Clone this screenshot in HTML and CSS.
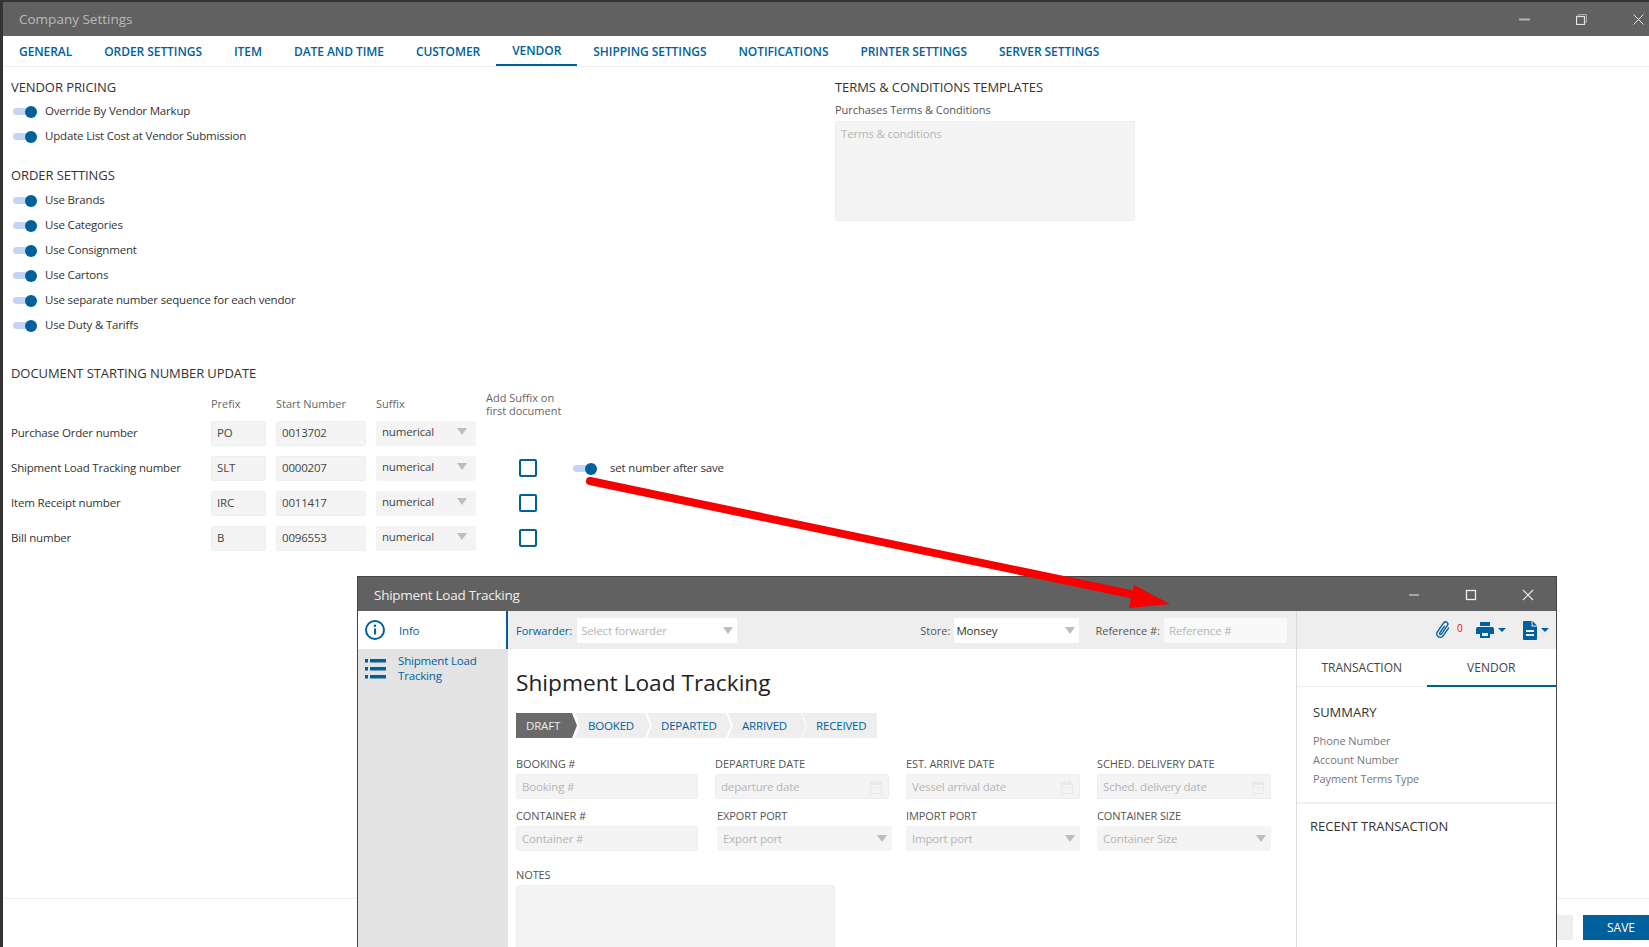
FILE: index.html
```html
<!DOCTYPE html>
<html lang="en">
<head>
<meta charset="utf-8">
<title>Company Settings</title>
<link rel="stylesheet" href="styles.css">
</head>
<body>
<div class="app">
  <header class="titlebar">
    <span class="titlebar-text">Company Settings</span>
    <div class="winbtns">
      <svg width="11" height="11" viewBox="0 0 11 11"><path d="M0 5.500h11" stroke="#b5b5b5" stroke-width="2"/></svg>
      <svg width="11" height="11" viewBox="0 0 11 11" fill="none" stroke="#e4e4e4"><rect x=".5" y="2.500" width="8" height="8" stroke-width="1.2"/><path d="M2.500 2.500v-2h8v8h-2" stroke="#aaa"/></svg>
      <svg width="11" height="11" viewBox="0 0 11 11"><path d="M.5.500l10 10M10.500.500l-10 10" stroke="#e8e8e8" stroke-width="1"/></svg>
    </div>
  </header>
  <nav class="tabs">
    <a class="tab">GENERAL</a><a class="tab">ORDER SETTINGS</a><a class="tab">ITEM</a><a class="tab">DATE AND TIME</a><a class="tab">CUSTOMER</a><a class="tab tab-active">VENDOR</a><a class="tab">SHIPPING SETTINGS</a><a class="tab">NOTIFICATIONS</a><a class="tab">PRINTER SETTINGS</a><a class="tab">SERVER SETTINGS</a>
  </nav>
  <main class="content">
    <section class="left">
      <h2 class="heading heading-pricing">VENDOR PRICING</h2>
      <div class="tg-row"><span class="toggle"></span>Override By Vendor Markup</div>
      <div class="tg-row"><span class="toggle"></span>Update List Cost at Vendor Submission</div>
      <h2 class="heading heading-order">ORDER SETTINGS</h2>
      <div class="tg-row"><span class="toggle"></span>Use Brands</div>
      <div class="tg-row"><span class="toggle"></span>Use Categories</div>
      <div class="tg-row"><span class="toggle"></span>Use Consignment</div>
      <div class="tg-row"><span class="toggle"></span>Use Cartons</div>
      <div class="tg-row"><span class="toggle"></span>Use separate number sequence for each vendor</div>
      <div class="tg-row"><span class="toggle"></span>Use Duty &amp; Tariffs</div>
      <h2 class="heading heading-doc">DOCUMENT STARTING NUMBER UPDATE</h2>
      <div class="doc-grid">
        <span></span><span class="col-label">Prefix</span><span class="col-label">Start Number</span><span class="col-label">Suffix</span><span class="col-label col-suffix">Add Suffix on<br>first document</span><span></span>

        <span class="doc-name">Purchase Order number</span><div class="field">PO</div><div class="field">0013702</div><div class="field select">numerical</div><span></span><span></span>

        <span class="doc-name">Shipment Load Tracking number</span><div class="field">SLT</div><div class="field">0000207</div><div class="field select">numerical</div><span class="check"></span><div class="tg-row tg-inline"><span class="toggle"></span>set number after save</div>

        <span class="doc-name">Item Receipt number</span><div class="field">IRC</div><div class="field">0011417</div><div class="field select">numerical</div><span class="check"></span><span></span>

        <span class="doc-name">Bill number</span><div class="field">B</div><div class="field">0096553</div><div class="field select">numerical</div><span class="check"></span><span></span>
      </div>
    </section>
    <section class="right">
      <h2 class="heading">TERMS &amp; CONDITIONS TEMPLATES</h2>
      <div class="terms-label">Purchases Terms &amp; Conditions</div>
      <div class="terms-box">Terms &amp; conditions</div>
    </section>
  </main>
  <footer class="footer">
    <button class="btn btn-cancel">CANCEL</button>
    <button class="btn btn-save">SAVE</button>
  </footer>
</div>

<div class="window">
  <header class="win-title">
    <span>Shipment Load Tracking</span>
    <div class="win-btns">
      <svg width="12" height="12" viewBox="0 0 12 12"><path d="M1 6h10" stroke="#bbb" stroke-width="1.5"/></svg>
      <svg width="12" height="12" viewBox="0 0 12 12" fill="none"><rect x="1.500" y="1.500" width="9" height="9" stroke="#eee" stroke-width="1.300"/></svg>
      <svg width="12" height="12" viewBox="0 0 12 12"><path d="M1 1l10 10M11 1L1 11" stroke="#eee" stroke-width="1.100"/></svg>
    </div>
  </header>
  <div class="win-body">
    <aside class="side">
      <div class="side-item side-active">
        <svg width="20" height="20" viewBox="0 0 20 20" fill="none" stroke="#00609c"><circle cx="10" cy="10" r="9" stroke-width="2"/><path d="M10 8.500v6" stroke-width="2"/><circle cx="10" cy="5.700" r="1.300" fill="#00609c" stroke="none"/></svg>
        <span>Info</span>
      </div>
      <div class="side-item side-list">
        <svg width="21" height="20" viewBox="0 0 21 20" fill="#00609c"><rect x="0" y="0" width="3" height="3.500"/><rect x="5" y="0" width="16" height="3.500"/><rect x="0" y="8" width="3" height="3.500"/><rect x="5" y="8" width="16" height="3.500"/><rect x="0" y="16" width="3" height="3.500"/><rect x="5" y="16" width="16" height="3.500"/></svg>
        <span>Shipment Load<br>Tracking</span>
      </div>
    </aside>
    <div class="win-main">
      <div class="toolbar">
        <span class="tb-label tb-blue">Forwarder:</span>
        <div class="tb-box tb-forwarder select ph">Select forwarder</div>
        <span class="tb-label tb-store">Store:</span>
        <div class="tb-box tb-monsey select">Monsey</div>
        <span class="tb-label tb-ref">Reference #:</span>
        <div class="tb-box tb-refbox ph">Reference #</div>
      </div>
      <div class="form-area">
        <h1 class="win-h1">Shipment Load Tracking</h1>
        <div class="steps">
          <span class="step step-draft">DRAFT</span><span class="step step-booked">BOOKED</span><span class="step step-departed">DEPARTED</span><span class="step step-arrived">ARRIVED</span><span class="step step-received">RECEIVED</span>
        </div>
        <div class="form-grid">
          <div class="fg"><label>BOOKING #</label><div class="field ph">Booking #</div></div>
          <div class="fg"><label>DEPARTURE DATE</label><div class="field ph date">departure date<svg width="14" height="16" viewBox="0 0 14 16" fill="#e9e9e9"><path d="M1 3h3V1h1v2h4V1h1v2h3v12H1zM2 6v8h10V6z"/><path d="M3 8h2v1H3zm3 0h2v1H6zm3 0h2v1H9z"/></svg></div></div>
          <div class="fg"><label>EST. ARRIVE DATE</label><div class="field ph date">Vessel arrival date<svg width="14" height="16" viewBox="0 0 14 16" fill="#e9e9e9"><path d="M1 3h3V1h1v2h4V1h1v2h3v12H1zM2 6v8h10V6z"/><path d="M3 8h2v1H3zm3 0h2v1H6zm3 0h2v1H9z"/></svg></div></div>
          <div class="fg"><label>SCHED. DELIVERY DATE</label><div class="field ph date">Sched. delivery date<svg width="14" height="16" viewBox="0 0 14 16" fill="#e9e9e9"><path d="M1 3h3V1h1v2h4V1h1v2h3v12H1zM2 6v8h10V6z"/><path d="M3 8h2v1H3zm3 0h2v1H6zm3 0h2v1H9z"/></svg></div></div>
          <div class="fg"><label>CONTAINER #</label><div class="field ph">Container #</div></div>
          <div class="fg fg-export"><label>EXPORT PORT</label><div class="field ph select">Export port</div></div>
          <div class="fg"><label>IMPORT PORT</label><div class="field ph select">Import port</div></div>
          <div class="fg"><label>CONTAINER SIZE</label><div class="field ph select">Container Size</div></div>
        </div>
        <label class="notes-label">NOTES</label>
        <div class="notes"></div>
      </div>
    </div>
    <aside class="panel">
      <div class="panel-tools">
        <svg width="17" height="20" viewBox="0 0 17 20" fill="none" stroke="#00609c" stroke-width="1.400" stroke-linecap="round"><g transform="rotate(35 8.500 10)"><path d="M11.500 5.500V15a3.500 3.500 0 0 1-7 0V4a2.300 2.300 0 0 1 4.600 0v10.500a1 1 0 0 1-2 0V6.500"/></g></svg>
        <span class="count">0</span>
        <svg class="ic-print" width="18" height="16" viewBox="0 0 18 16" fill="#00609c"><path d="M4 0h10v4H4zM2 5h14a2 2 0 0 1 2 2v5h-4v4H4v-4H0V7a2 2 0 0 1 2-2zm4 6v3h6v-3z"/></svg>
        <span class="caret"></span>
        <svg class="ic-doc" width="14" height="19" viewBox="0 0 14 19" fill="#00609c"><path d="M1 0h7.500v5.500H14V18a1 1 0 0 1-1 1H1a1 1 0 0 1-1-1V1a1 1 0 0 1 1-1zM9.500 0L14 4.500H9.500zM3 9v2h8V9zm0 4v2h8v-2z"/></svg>
        <span class="caret"></span>
      </div>
      <div class="panel-tabs">
        <span class="ptab">TRANSACTION</span><span class="ptab ptab-active">VENDOR</span>
      </div>
      <div class="summary">
        <h3 class="heading">SUMMARY</h3>
        <p>Phone Number</p>
        <p>Account Number</p>
        <p>Payment Terms Type</p>
      </div>
      <h3 class="heading recent">RECENT TRANSACTION</h3>
    </aside>
  </div>
</div>

<svg class="arrow" width="1649" height="947" viewBox="0 0 1649 947">
  <path d="M590 481L1140 596" stroke="#f60000" stroke-width="8" stroke-linecap="round"/>
  <path d="M1134 585L1170 604L1129 608Z" fill="#f60000"/>
</svg>
</body>
</html>
```

FILE: styles.css
```css
* { box-sizing: border-box; }
html, body { margin: 0; height: 947px; overflow: hidden; background: #fff; }
body { font: 11.5px/16px "Open Sans", "Noto Sans", sans-serif; letter-spacing: -0.18px; color: #333; position: relative; }
.app { height: 947px; display: flex; flex-direction: column; border-left: 3px solid #333; }

.titlebar { flex: none; height: 36px; border-top: 2px solid #333; background: #616161; display: flex; align-items: center; justify-content: space-between; padding-left: 16px; }
.titlebar-text { font-size: 13.5px; letter-spacing: 0; color: #b9b9b9; }
.winbtns { display: flex; gap: 46px; padding-right: 5px; }

.tabs { flex: none; height: 31px; display: flex; border-bottom: 1px solid #eee; }
.tab { padding: 8px 16px 0; font-size: 12px; letter-spacing: -0.06px; font-weight: 600; color: #00609c; white-space: nowrap; }
.tab-active { padding-top: 7px; border-bottom: 2px solid #00609c; height: 30px; }

.content { flex: 1; display: grid; grid-template-columns: 824px 300px; padding: 11px 0 0 8px; min-height: 0; }
.heading { margin: 0; font-size: 13px; line-height: 18px; font-weight: 400; letter-spacing: -0.08px; color: #333; }
.heading-pricing { margin-bottom: 3px; }
.heading-order { margin: 17px 0 4px; }
.heading-doc { margin: 26px 0 8px; }

.tg-row { height: 25px; display: flex; align-items: center; gap: 8px; padding: 0 0 1px 2px; }
.toggle { position: relative; width: 24px; height: 12px; flex: none; margin-top: 1px; }
.toggle::before { content: ""; position: absolute; left: 0; right: 4px; top: 2.500px; height: 7px; border-radius: 4px; background: #c3d5f5; }
.toggle::after { content: ""; position: absolute; right: 0; top: 0; width: 12px; height: 12px; border-radius: 50%; background: #00609c; }

.doc-grid { display: grid; grid-template-columns: 190px 55px 90px 100px 77px auto; column-gap: 10px; grid-template-rows: 31px repeat(4, 35px); align-items: start; }
.col-label { font-size: 11px; line-height: 13px; letter-spacing: 0; color: #666; align-self: center; margin-bottom: 4px; white-space: nowrap; }
.doc-name { line-height: 23px; }
.field { height: 25px; background: #f4f4f4; border: 1px solid #eee; border-radius: 2px; padding: 0 4px 0 5px; line-height: 23px; display: flex; align-items: center; justify-content: space-between; white-space: nowrap; color: #444; }
.select { border-color: transparent; }
.doc-grid .field { padding-bottom: 2px; }
.doc-grid .select { padding: 0 8px 4px 5px; }
.select::after { content: ""; flex: none; width: 0; height: 0; border: 5px solid transparent; border-top: 7px solid #bdbdbd; border-bottom: 0; }
.check { width: 18px; height: 18px; margin: 3px 0 0 33px; border: 2px solid #00609c; border-radius: 2px; }
.tg-inline { gap: 13px; padding-left: 0; }

.terms-label { margin-top: 6px; font-size: 11px; line-height: 16px; letter-spacing: -0.03px; color: #555; }
.terms-box { height: 100px; margin-top: 3px; padding: 4px 5px; background: #f4f4f4; border: 1px solid #eee; border-radius: 2px; color: #b5b5b5; }

.footer { flex: none; height: 49px; border-top: 1px solid #eee; padding-top: 16px; display: flex; justify-content: flex-end; gap: 10px; }
.btn { height: 25px; border: 0; padding: 0; font: inherit; }
.btn-cancel { width: 90px; background: #eee; color: #555; }
.btn-save { width: 66px; padding-left: 10px; font-size: 12px; background: #00609c; color: #fff; }

.window { position: absolute; left: 357px; top: 576px; width: 1200px; height: 371px; background: #fff; border: 1px solid #444; border-bottom: 0; display: flex; flex-direction: column; }
.win-title { flex: none; height: 34px; background: #616161; color: #eee; font-size: 13.5px; letter-spacing: -0.27px; display: flex; align-items: center; justify-content: space-between; padding: 2px 0 0 16px; }
.win-btns { display: flex; gap: 45px; padding-right: 22px; }
.win-body { flex: 1; display: flex; min-height: 0; }

.side { flex: none; width: 150px; background: #e3e3e3; }
.side-item { display: flex; gap: 12px; color: #00609c; padding-left: 7px; line-height: 15px; }
.side-active { height: 38px; align-items: center; gap: 14px; background: #fff; border-right: 2px solid #00609c; }
.side-list { padding-top: 10px; }
.side-list span { margin-top: -6px; }

.win-main { flex: 1; min-width: 0; display: flex; flex-direction: column; }
.toolbar { flex: none; height: 38px; background: #eee; display: flex; align-items: center; padding: 1px 9px 0 8px; }
.tb-label { font-size: 11px; letter-spacing: 0; color: #555; white-space: nowrap; }
.tb-blue { color: #00609c; }
.tb-box { height: 25px; background: #fff; border-radius: 2px; display: flex; align-items: center; justify-content: space-between; padding: 0 4px 0 5px; white-space: nowrap; color: #333; }
.tb-forwarder { width: 160px; margin-left: 5px; padding-left: 4px; }
.tb-store { margin-left: auto; }
.tb-monsey { width: 125px; margin-left: 4px; padding-left: 2px; }
.tb-ref { margin-left: 16px; }
.tb-refbox { width: 123px; margin-left: 4px; background: #f9f9f9; }
.ph { color: #b5b5b5; }

.form-area { flex: 1; min-height: 0; padding: 17px 0 0 8px; }
.win-h1 { margin: 0; font-size: 22.7px; line-height: 34px; font-weight: 400; letter-spacing: 0; color: #222; white-space: nowrap; }
.steps { display: flex; margin-top: 13px; }
.step { height: 25px; line-height: 25px; padding-left: 14px; background: #eee; color: #00609c; margin-left: -3px; white-space: nowrap; clip-path: polygon(0 0, calc(100% - 5px) 0, 100% 50%, calc(100% - 5px) 100%, 0 100%, 5px 50%); }
.step-draft { width: 61px; margin-left: 0; padding-left: 10px; background: #6a6a6a; color: #eee; clip-path: polygon(0 0, calc(100% - 5px) 0, 100% 50%, calc(100% - 5px) 100%, 0 100%); }
.step-booked { width: 75px; margin-left: -2px; padding-left: 13px; }
.step-departed { width: 84px; }
.step-arrived { width: 78px; }
.step-received { width: 75px; margin-left: -4px; clip-path: polygon(0 0, 100% 0, 100% 100%, 0 100%, 5px 50%); }

.form-grid { display: grid; grid-template-columns: 182px repeat(3, 174px); column-gap: 17px; row-gap: 10px; margin-top: 19px; width: 755px; }
.fg label, .notes-label { display: block; font-size: 11px; line-height: 14px; letter-spacing: -0.1px; color: #555; margin-bottom: 3px; white-space: nowrap; }
.fg-export { margin: 0 -3px 0 2px; }
.date svg { flex: none; margin-right: 1px; }
.notes-label { margin-top: 17px; }
.notes { width: 319px; height: 100px; background: #f4f4f4; border: 1px solid #eee; border-radius: 2px; }

.panel { flex: none; width: 260px; border-left: 1px solid #ddd; }
.panel-tools { height: 38px; background: #eee; display: flex; align-items: center; padding-left: 138px; }
.count { color: #f00; font-size: 10px; letter-spacing: 0; margin: -4px 0 0 5px; width: 19px; }
.caret { width: 0; height: 0; border: 4px solid transparent; border-top: 4px solid #00609c; border-bottom: 0; margin-left: 4px; }
.ic-doc { margin-left: 17px; }
.panel-tabs { display: flex; height: 38px; border-bottom: 1px solid #eee; }
.ptab { flex: 1; text-align: center; font-size: 12px; letter-spacing: 0; line-height: 37px; color: #444; }
.ptab-active { height: 38px; border-bottom: 2px solid #00609c; }
.summary { height: 117px; padding: 16px 0 0 16px; border-bottom: 2px solid #f0f0f0; }
.summary p { margin: 0; font-size: 11px; line-height: 19px; letter-spacing: -0.08px; color: #777; }
.summary .heading { margin-bottom: 10px; letter-spacing: 0; }
.recent { margin: 13px 0 0 13px; letter-spacing: 0; }

.arrow { position: absolute; left: 0; top: 0; pointer-events: none; }
```
